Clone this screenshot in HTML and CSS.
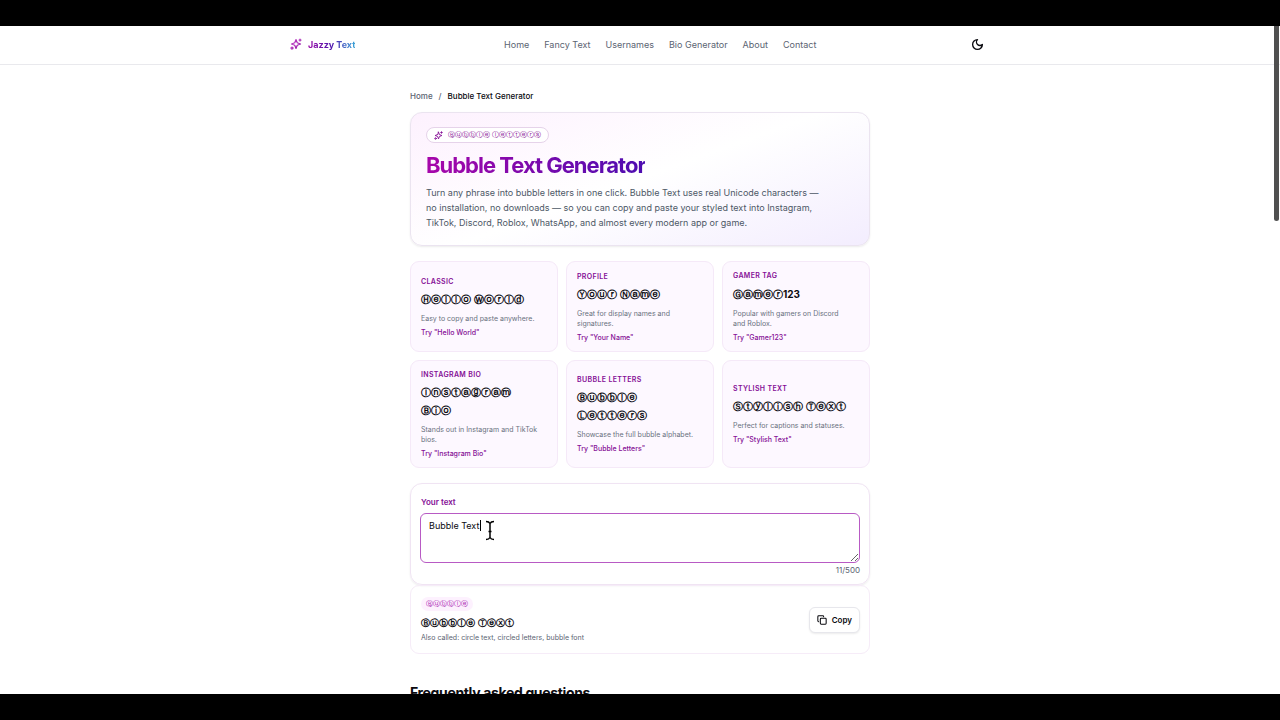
FILE: index.html
```html
<!DOCTYPE html>
<html lang="en">
<head>
<meta charset="utf-8">
<title>Bubble Text Generator</title>
<link rel="stylesheet" href="styles.css">
</head>
<body>
<div class="viewport">
  <header class="site-header">
    <div class="header-inner">
      <a class="brand" href="#">
        <svg class="brand-icon" viewBox="0 0 24 24" aria-hidden="true">
          <defs><linearGradient id="spark" x1="0" y1="0" x2="1" y2="1"><stop offset="0" stop-color="#c03fc8"/><stop offset="1" stop-color="#9316a4"/></linearGradient></defs>
          <g fill="none" stroke="url(#spark)" stroke-width="2.4" stroke-linecap="round" stroke-linejoin="round">
            <path d="M12 3 14.500 9.500 21 12 14.500 14.500 12 21 9.500 14.500 3 12 9.500 9.500Z"/>
            <path d="M20 2v4M18 4h4"/><path d="M20.500 19v3"/><path d="M4 4v1"/>
            <circle cx="4" cy="20" r="2"/>
          </g>
        </svg>
        <span class="brand-name">Jazzy Text</span>
      </a>
      <nav class="site-nav" aria-label="Main">
        <a href="#">Home</a><a href="#">Fancy Text</a><a href="#">Usernames</a><a href="#">Bio Generator</a><a href="#">About</a><a href="#">Contact</a>
      </nav>
      <button class="theme-toggle" type="button" aria-label="Toggle dark mode">
        <svg class="line-icon moon" viewBox="0 0 24 24" aria-hidden="true"><path d="M12 3a6 6 0 0 0 9 9 9 9 0 1 1-9-9Z"/></svg>
      </button>
    </div>
  </header>
  <main class="page">
    <nav class="breadcrumb" aria-label="Breadcrumb"><a href="#">Home</a><span>/</span><span class="current">Bubble Text Generator</span></nav>

    <section class="hero">
      <div class="hero-badge">
        <svg class="line-icon badge-icon" viewBox="0 0 24 24" aria-hidden="true"><path d="M12 3 14.500 9.500 21 12 14.500 14.500 12 21 9.500 14.500 3 12 9.500 9.500Z"/><path d="M20 2v4M18 4h4"/><circle cx="4" cy="20" r="2"/></svg>
        <span class="circled">Ⓑⓤⓑⓑⓛⓔ ⓛⓔⓣⓣⓔⓡⓢ</span>
      </div>
      <h1>Bubble Text Generator</h1>
      <p>Turn any phrase into bubble letters in one click. Bubble Text uses real Unicode characters — no installation, no downloads — so you can copy and paste your styled text into Instagram, TikTok, Discord, Roblox, WhatsApp, and almost every modern app or game.</p>
    </section>

    <section class="samples" aria-label="Examples">
      <button class="sample" type="button"><span class="sample-label">Classic</span><span class="sample-text circled">Ⓗⓔⓛⓛⓞ Ⓦⓞⓡⓛⓓ</span><span class="sample-note">Easy to copy and paste anywhere.</span><span class="sample-try">Try "Hello World"</span></button>
      <button class="sample" type="button"><span class="sample-label">Profile</span><span class="sample-text circled">Ⓨⓞⓤⓡ Ⓝⓐⓜⓔ</span><span class="sample-note">Great for display names and signatures.</span><span class="sample-try">Try "Your Name"</span></button>
      <button class="sample" type="button"><span class="sample-label">Gamer tag</span><span class="sample-text circled">Ⓖⓐⓜⓔⓡ<span class="digits">123</span></span><span class="sample-note">Popular with gamers on Discord and&nbsp;Roblox.</span><span class="sample-try">Try "Gamer123"</span></button>
      <button class="sample" type="button"><span class="sample-label">Instagram bio</span><span class="sample-text circled">Ⓘⓝⓢⓣⓐⓖⓡⓐⓜ Ⓑⓘⓞ</span><span class="sample-note">Stands out in Instagram and TikTok bios.</span><span class="sample-try">Try "Instagram Bio"</span></button>
      <button class="sample" type="button"><span class="sample-label">Bubble letters</span><span class="sample-text circled">Ⓑⓤⓑⓑⓛⓔ Ⓛⓔⓣⓣⓔⓡⓢ</span><span class="sample-note">Showcase the full bubble alphabet.</span><span class="sample-try">Try "Bubble Letters"</span></button>
      <button class="sample" type="button"><span class="sample-label">Stylish text</span><span class="sample-text circled">Ⓢⓣⓨⓛⓘⓢⓗ Ⓣⓔⓧⓣ</span><span class="sample-note">Perfect for captions and statuses.</span><span class="sample-try">Try "Stylish Text"</span></button>
    </section>

    <section class="editor">
      <label for="source">Your text</label>
      <div class="field">
        <textarea id="source" maxlength="500">Bubble Text</textarea>
        <span class="caret"></span>
        <svg class="pointer" viewBox="0 0 10 20" aria-hidden="true"><path d="M1 1Q4 1 5 3Q6 1 9 1M5 3V17M1 19Q4 19 5 17Q6 19 9 19M3.500 11H6.500"/></svg>
      </div>
      <div class="counter">11/500</div>
    </section>

    <section class="result">
      <div class="result-body">
        <span class="result-tag circled">Ⓑⓤⓑⓑⓛⓔ</span>
        <p class="result-text circled">Ⓑⓤⓑⓑⓛⓔ Ⓣⓔⓧⓣ</p>
        <p class="result-note">Also called: circle text, circled letters, bubble font</p>
      </div>
      <button class="copy" type="button">
        <svg class="line-icon" viewBox="0 0 24 24" aria-hidden="true"><rect x="8" y="8" width="14" height="14" rx="2"/><path d="M4 16a2 2 0 0 1-2-2V4a2 2 0 0 1 2-2h10a2 2 0 0 1 2 2"/></svg>
        Copy
      </button>
    </section>

    <h2>Frequently asked questions</h2>
  </main>
  <div class="scroll-thumb"></div>
</div>
</body>
</html>
```
FILE: styles.css
```css
* { box-sizing: border-box; }
body {
  margin: 0;
  height: 100vh;
  padding: 26px 0;
  background: #000;
  font-family: Inter, sans-serif;
  color: #0a0a0f;
}
a { color: inherit; text-decoration: none; }
button { font: inherit; color: inherit; cursor: pointer; }
p, h1, h2 { margin: 0; }
.viewport { position: relative; height: 100%; overflow: hidden; background: #fff; }
.line-icon { width: 10px; height: 10px; flex: none; fill: none; stroke: currentColor; stroke-width: 2.5; stroke-linecap: round; stroke-linejoin: round; }
.circled { font-family: "DejaVu Sans", sans-serif; }

.site-header { border-bottom: 1px solid #e9e9ed; }
.header-inner { display: flex; align-items: center; justify-content: space-between; max-width: 700px; height: 38px; margin: 0 auto; padding-bottom: 2px; }
.brand { display: flex; align-items: center; gap: 6px; }
.brand-icon { width: 12px; height: 12px; }
.brand-name { font-size: 9px; font-weight: 700; background: linear-gradient(90deg, #9b0fa8, #4f16ac 50%, #3aa5d8); background-clip: text; color: transparent; }
.site-nav { display: flex; gap: 15px; font-size: 9px; color: #5b6472; }
.theme-toggle { display: flex; padding: 6px; border: 0; background: none; }
.moon { width: 13px; height: 13px; }

.page { max-width: 460px; margin: 0 auto; padding-top: 25px; }
.breadcrumb { display: flex; gap: 6px; margin-bottom: 9px; font-size: 8px; line-height: 13px; font-weight: 500; color: #5b6472; }
.breadcrumb .current { color: #0a0a0f; }

.hero { padding: 14px 15px 15px; border: 1px solid #ebe4f0; border-radius: 12px; background: linear-gradient(160deg, #fdf1fe, #fff 50%, #f3edfe); box-shadow: 0 1px 2px #00000014; }
.hero-badge { display: flex; align-items: center; gap: 5px; width: fit-content; height: 16px; padding: 0 7px; border: 1px solid #e6d3ea; border-radius: 8px; background: #fff; color: #861196; font-size: 7px; font-weight: 500; }
.badge-icon { width: 9px; height: 9px; }
.hero h1 { width: fit-content; margin-top: 8px; font-size: 22px; line-height: 28px; font-weight: 700; letter-spacing: -1px; background: linear-gradient(90deg, #a706aa, #4d0db0); background-clip: text; color: transparent; }
.hero p { max-width: 400px; margin-top: 6px; font-size: 9px; line-height: 15px; color: #4d5866; }

.samples { display: grid; grid-template-columns: repeat(3, 1fr); gap: 8px; margin-top: 15px; }
.sample { display: flex; flex-direction: column; justify-content: center; padding: 9px 10px 8px; border: 1px solid #f5e9f8; border-radius: 9px; background: #fdf8ff; text-align: left; }
.sample-label { font-size: 7px; line-height: 10px; font-weight: 600; letter-spacing: 0.05em; text-transform: uppercase; color: #850f96; }
.sample-text { margin-top: 4px; padding-right: 8px; font-size: 10px; line-height: 18px; font-weight: 700; color: #0a0a0f; }
.digits { font-family: Inter, sans-serif; }
.sample-note { margin-top: 5px; font-size: 7px; line-height: 10px; color: #69717e; }
.sample-try { margin-top: 4px; font-size: 7px; line-height: 10px; font-weight: 500; color: #850f96; }

.editor { margin-top: 15px; padding: 12px 9px 8px; border: 1px solid #f0e4f3; border-radius: 12px; box-shadow: 0 1px 2px #00000014; }
.editor label { display: block; padding-left: 1px; font-size: 8px; line-height: 12px; font-weight: 600; color: #850f96; }
.field { position: relative; margin-top: 5px; }
.field textarea { display: block; width: 100%; height: 50px; padding: 5px 8px; border: 1px solid #b85ac4; border-radius: 6px; outline: 0; resize: vertical; background: #fff; font: 9px/13px Inter, sans-serif; color: #0a0a0f; }
.caret { position: absolute; left: 60px; top: 7px; width: 1px; height: 11px; background: #000; }
.pointer { position: absolute; left: 65px; top: 7px; width: 10px; height: 21px; fill: none; stroke: #000; stroke-width: 1.5; }
.counter { margin-top: 2px; font-size: 8px; line-height: 11px; text-align: right; color: #5b6472; }

.result { display: flex; align-items: center; justify-content: space-between; padding: 11px 9px 10px 10px; border: 1px solid #f6ecf8; border-radius: 9px; }
.result-body { display: flex; flex-direction: column; align-items: flex-start; }
.result-tag { padding: 0 5px; border-radius: 8px; background: #fdf1fe; color: #a513ae; font-size: 7px; line-height: 14px; font-weight: 500; }
.result-text { margin-top: 4px; font-size: 9px; line-height: 16px; font-weight: 600; }
.result-note { margin-top: 2px; font-size: 7px; line-height: 10px; color: #5b6472; }
.copy { display: flex; align-items: center; gap: 5px; height: 26px; padding: 0 7px; border: 1px solid #e7e7ec; border-radius: 6px; background: #fff; box-shadow: 0 1px 2px #00000014; font-size: 8px; font-weight: 600; }
.page h2 { margin-top: 30px; font-size: 14px; line-height: 18px; font-weight: 700; letter-spacing: -0.025em; }
.scroll-thumb { position: absolute; top: 0; right: 1px; width: 5px; height: 195px; border-radius: 0 0 3px 3px; background: #505050; }
```
